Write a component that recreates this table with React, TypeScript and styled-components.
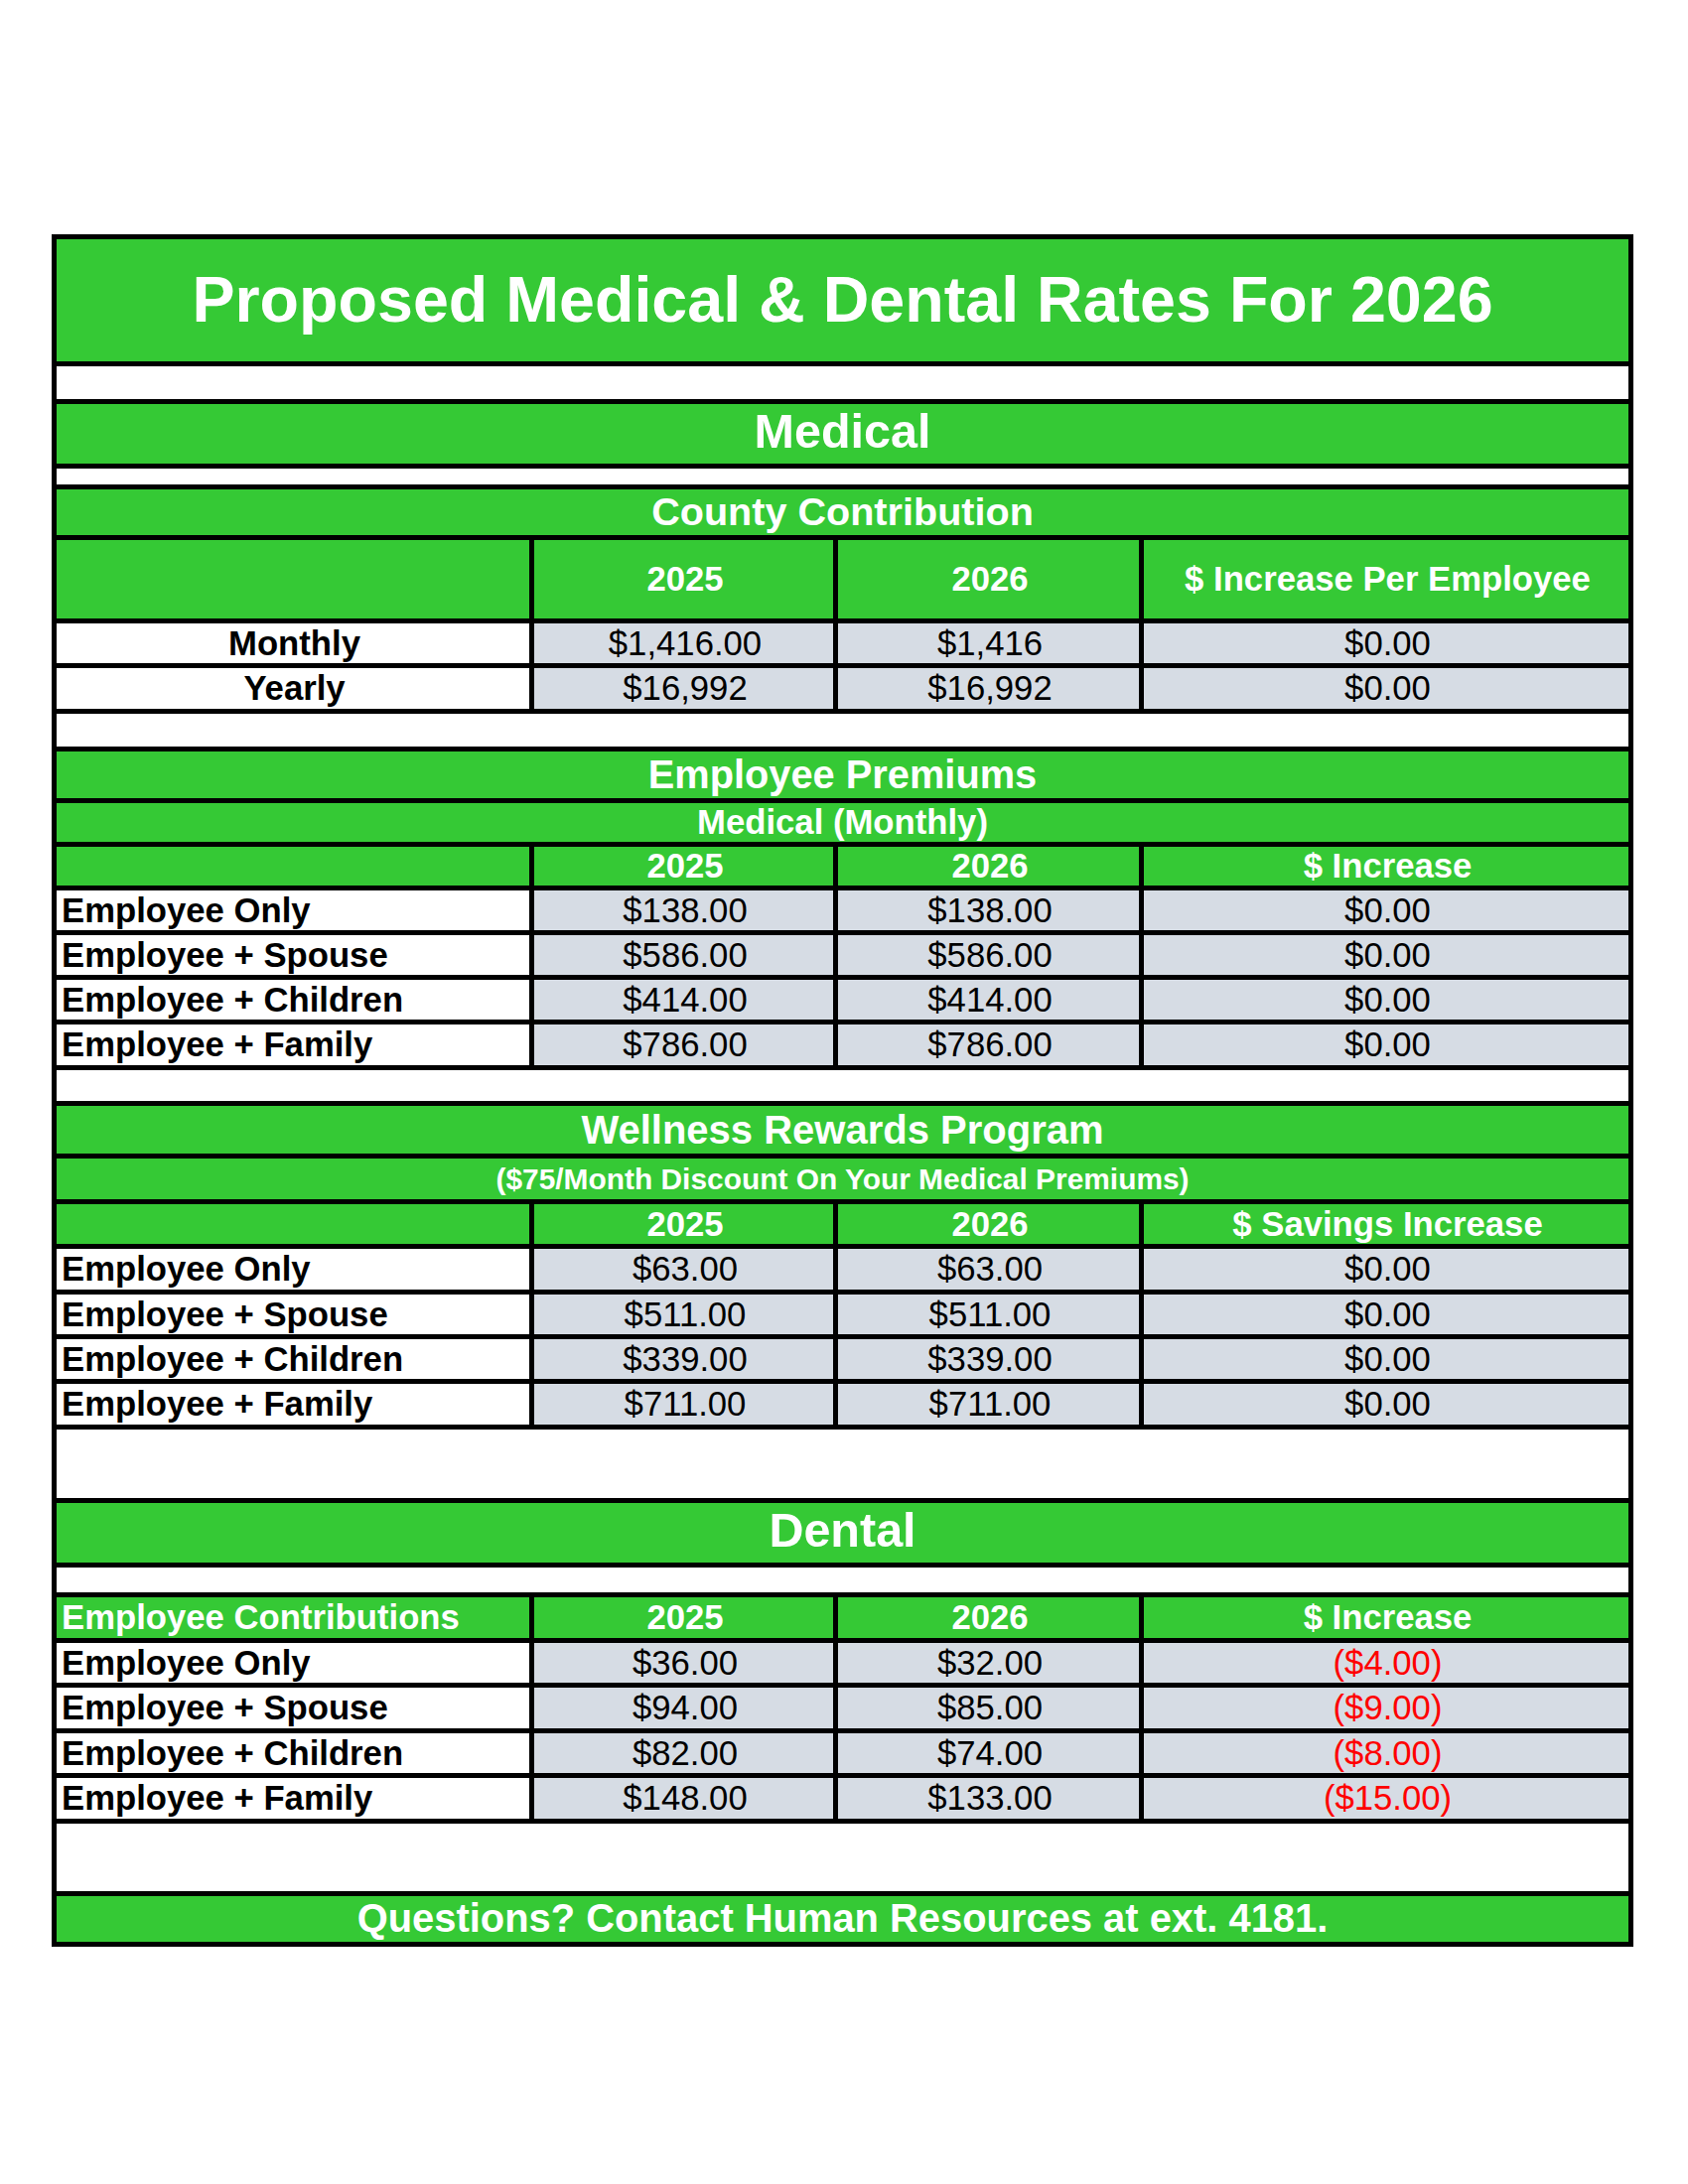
import React from "react";
import styled, { createGlobalStyle } from "styled-components";

const GREEN = "#35c935";
const GRAY = "#d6dce4";
const LINE = "#000000";

const GlobalStyle = createGlobalStyle`
  html, body {
    margin: 0;
    padding: 0;
    background: #ffffff;
  }
  body {
    font-family: "Liberation Sans", Arial, Helvetica, sans-serif;
  }
`;

const Page = styled.div`
  min-height: 2200px;
  padding: 236px 0 0 52px;
  box-sizing: border-box;
  background: #ffffff;
`;

const Sheet = styled.div`
  display: grid;
  grid-template-columns: 476px 301px 303px 488px;
  gap: 5px;
  padding: 5px;
  width: max-content;
  background: ${LINE};
`;

const Band = styled.div<{ $h: number; $size: number; $lift?: number }>`
  grid-column: 1 / -1;
  height: ${(p) => p.$h}px;
  box-sizing: border-box;
  padding-bottom: ${(p) => p.$lift ?? 0}px;
  display: flex;
  align-items: center;
  justify-content: center;
  background: ${GREEN};
  color: #ffffff;
  font-weight: 700;
  font-size: ${(p) => p.$size}px;
  line-height: 1;
  white-space: nowrap;
`;

const Spacer = styled.div<{ $h: number }>`
  grid-column: 1 / -1;
  height: ${(p) => p.$h}px;
  background: #ffffff;
`;

const HeadCell = styled.div<{ $h: number; $left?: boolean }>`
  height: ${(p) => p.$h}px;
  display: flex;
  align-items: center;
  justify-content: ${(p) => (p.$left ? "flex-start" : "center")};
  padding-left: ${(p) => (p.$left ? "5px" : "3px")};
  background: ${GREEN};
  color: #ffffff;
  font-weight: 700;
  font-size: 34.7px;
  line-height: 1;
  white-space: nowrap;
`;

const LabelCell = styled.div<{ $h: number; $left?: boolean }>`
  height: ${(p) => p.$h}px;
  display: flex;
  align-items: center;
  justify-content: ${(p) => (p.$left ? "flex-start" : "center")};
  padding-left: ${(p) => (p.$left ? "5px" : "3px")};
  background: #ffffff;
  color: #000000;
  font-weight: 700;
  font-size: 34.7px;
  line-height: 1;
  white-space: nowrap;
`;

const ValueCell = styled.div<{ $h: number; $neg?: boolean }>`
  height: ${(p) => p.$h}px;
  display: flex;
  align-items: center;
  justify-content: center;
  padding-left: 3px;
  background: ${GRAY};
  color: ${(p) => (p.$neg ? "#ff0000" : "#000000")};
  font-weight: 400;
  font-size: 34.7px;
  line-height: 1;
  white-space: nowrap;
`;

type Row = { label: string; a: string; b: string; c: string; h: number };

const county: Row[] = [
  { label: "Monthly", a: "$1,416.00", b: "$1,416", c: "$0.00", h: 40 },
  { label: "Yearly", a: "$16,992", b: "$16,992", c: "$0.00", h: 41 },
];

const premiums: Row[] = [
  { label: "Employee Only", a: "$138.00", b: "$138.00", c: "$0.00", h: 40 },
  { label: "Employee + Spouse", a: "$586.00", b: "$586.00", c: "$0.00", h: 40 },
  { label: "Employee + Children", a: "$414.00", b: "$414.00", c: "$0.00", h: 40 },
  { label: "Employee + Family", a: "$786.00", b: "$786.00", c: "$0.00", h: 41 },
];

const wellness: Row[] = [
  { label: "Employee Only", a: "$63.00", b: "$63.00", c: "$0.00", h: 41 },
  { label: "Employee + Spouse", a: "$511.00", b: "$511.00", c: "$0.00", h: 40 },
  { label: "Employee + Children", a: "$339.00", b: "$339.00", c: "$0.00", h: 40 },
  { label: "Employee + Family", a: "$711.00", b: "$711.00", c: "$0.00", h: 41 },
];

const dental: Row[] = [
  { label: "Employee Only", a: "$36.00", b: "$32.00", c: "($4.00)", h: 40 },
  { label: "Employee + Spouse", a: "$94.00", b: "$85.00", c: "($9.00)", h: 41 },
  { label: "Employee + Children", a: "$82.00", b: "$74.00", c: "($8.00)", h: 40 },
  { label: "Employee + Family", a: "$148.00", b: "$133.00", c: "($15.00)", h: 41 },
];

function DataRows({ rows, left }: { rows: Row[]; left?: boolean }) {
  return (
    <>
      {rows.map((r) => (
        <React.Fragment key={r.label}>
          <LabelCell $h={r.h} $left={left}>
            {r.label}
          </LabelCell>
          <ValueCell $h={r.h}>{r.a}</ValueCell>
          <ValueCell $h={r.h}>{r.b}</ValueCell>
          <ValueCell $h={r.h} $neg={r.c.startsWith("(")}>
            {r.c}
          </ValueCell>
        </React.Fragment>
      ))}
    </>
  );
}

function HeaderRow({
  h,
  first = "",
  last,
  firstLeft,
}: {
  h: number;
  first?: string;
  last: string;
  firstLeft?: boolean;
}) {
  return (
    <>
      <HeadCell $h={h} $left={firstLeft}>
        {first}
      </HeadCell>
      <HeadCell $h={h}>2025</HeadCell>
      <HeadCell $h={h}>2026</HeadCell>
      <HeadCell $h={h}>{last}</HeadCell>
    </>
  );
}

export default function App() {
  return (
    <>
      <GlobalStyle />
      <Page>
        <Sheet>
          <Band $h={123} $size={64.6}>
            Proposed Medical &amp; Dental Rates For 2026
          </Band>
          <Spacer $h={33} />
          <Band $h={60} $size={48.5} $lift={5}>
            Medical
          </Band>
          <Spacer $h={16} />
          <Band $h={46} $size={39.6}>
            County Contribution
          </Band>
          <HeaderRow h={79} last="$ Increase Per Employee" />
          <DataRows rows={county} />
          <Spacer $h={33} />

          <Band $h={47} $size={39.8}>
            Employee Premiums
          </Band>
          <Band $h={39} $size={34.7}>
            Medical (Monthly)
          </Band>
          <HeaderRow h={39} last="$ Increase" />
          <DataRows rows={premiums} left />
          <Spacer $h={31} />

          <Band $h={48} $size={40}>
            Wellness Rewards Program
          </Band>
          <Band $h={41} $size={29.9}>
            ($75/Month Discount On Your Medical Premiums)
          </Band>
          <HeaderRow h={40} last="$ Savings Increase" />
          <DataRows rows={wellness} left />
          <Spacer $h={69} />

          <Band $h={60} $size={48.5} $lift={5}>
            Dental
          </Band>
          <Spacer $h={25} />
          <HeaderRow h={41} first="Employee Contributions" firstLeft last="$ Increase" />
          <DataRows rows={dental} left />
          <Spacer $h={68} />

          <Band $h={46} $size={39.9}>
            Questions? Contact Human Resources at ext. 4181.
          </Band>
        </Sheet>
      </Page>
    </>
  );
}
